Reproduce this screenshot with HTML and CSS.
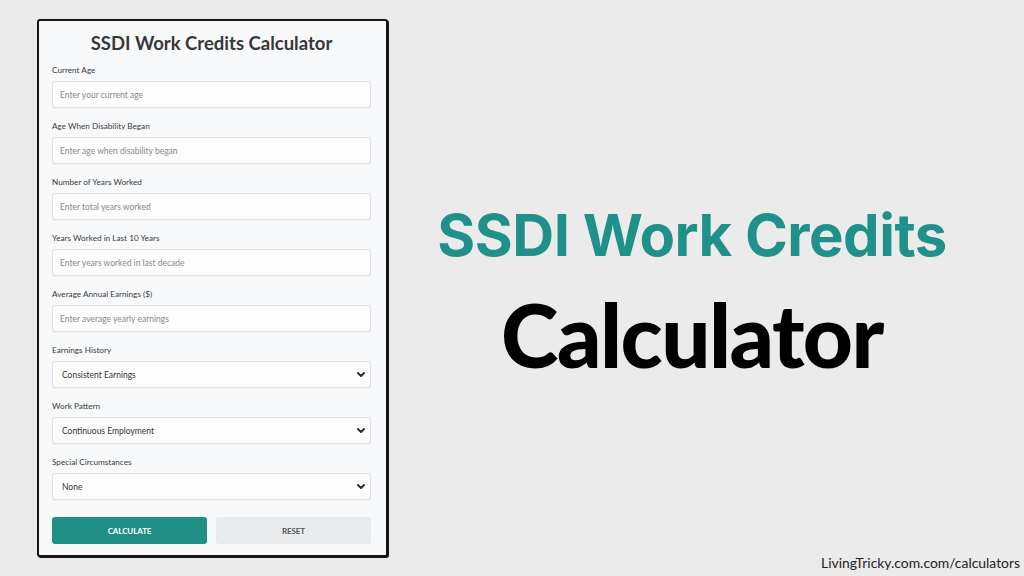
FILE: index.html
```html
<!DOCTYPE html>
<html lang="en">
<head>
<meta charset="utf-8">
<title>SSDI Work Credits Calculator</title>
<link rel="stylesheet" href="styles.css">
</head>
<body>
<div class="page">
  <form class="card">
    <h2 class="card-title">SSDI Work Credits Calculator</h2>
    <div class="field">
      <label class="label">Current Age</label>
      <div class="input">Enter your current age</div>
    </div>
    <div class="field">
      <label class="label">Age When Disability Began</label>
      <div class="input">Enter age when disability began</div>
    </div>
    <div class="field">
      <label class="label">Number of Years Worked</label>
      <div class="input">Enter total years worked</div>
    </div>
    <div class="field">
      <label class="label">Years Worked in Last 10 Years</label>
      <div class="input">Enter years worked in last decade</div>
    </div>
    <div class="field">
      <label class="label">Average Annual Earnings ($)</label>
      <div class="input">Enter average yearly earnings</div>
    </div>
    <div class="field">
      <label class="label">Earnings History</label>
      <div class="input select"><span>Consistent Earnings</span><svg class="chev" viewBox="0 0 8 5" width="8" height="5"><path d="M1 1 L4 4 L7 1" fill="none" stroke="#2b2b2b" stroke-width="1.9" stroke-linecap="round" stroke-linejoin="round"/></svg></div>
    </div>
    <div class="field">
      <label class="label">Work Pattern</label>
      <div class="input select"><span>Continuous Employment</span><svg class="chev" viewBox="0 0 8 5" width="8" height="5"><path d="M1 1 L4 4 L7 1" fill="none" stroke="#2b2b2b" stroke-width="1.9" stroke-linecap="round" stroke-linejoin="round"/></svg></div>
    </div>
    <div class="field">
      <label class="label">Special Circumstances</label>
      <div class="input select"><span>None</span><svg class="chev" viewBox="0 0 8 5" width="8" height="5"><path d="M1 1 L4 4 L7 1" fill="none" stroke="#2b2b2b" stroke-width="1.9" stroke-linecap="round" stroke-linejoin="round"/></svg></div>
    </div>
    <div class="actions">
      <div class="btn btn-primary">CALCULATE</div>
      <div class="btn btn-secondary">RESET</div>
    </div>
  </form>
  <section class="hero">
    <div class="hero-text">
      <h1 class="hero-title">SSDI Work Credits</h1>
      <div class="hero-sub">Calculator</div>
    </div>
    <footer class="site">LivingTricky.com.com/calculators</footer>
  </section>
</div>
</body>
</html>
```
FILE: styles.css
```css
html, body {
  margin: 0;
  padding: 0;
}
body {
  background: #ebebeb;
  font-family: Lato, "Open Sans", sans-serif;
}
.page {
  display: flex;
  box-sizing: border-box;
  height: 576px;
  padding: 19px 4px 0 37px;
}
.card {
  flex: none;
  box-sizing: border-box;
  width: 351px;
  height: 538px;
  margin: 0;
  padding: 10px 15px 12px 13px;
  background: #f8f9fa;
  border: 2px solid #161616;
  border-radius: 3px;
  box-shadow: 1px 1px 0 #161616;
  display: flex;
  flex-direction: column;
}
.card-title {
  margin: 0 0 9px;
  height: 24px;
  line-height: 24px;
  text-align: center;
  font-family: Lato, sans-serif;
  font-weight: 700;
  font-size: 18.5px;
  color: #383838;
}
.field {
  display: flex;
  flex-direction: column;
  margin-bottom: 12px;
}
.label {
  height: 12px;
  line-height: 12px;
  font-size: 8.2px;
  color: #3a3a3a;
  margin-bottom: 5px;
}
.input {
  box-sizing: border-box;
  height: 27px;
  display: flex;
  align-items: center;
  padding: 0 5px 0 7px;
  background: #fdfdfd;
  border: 1px solid #dedede;
  border-radius: 3px;
  box-shadow: 0 1px 1px rgba(0,0,0,0.04);
  font-size: 8.5px;
  color: #8a8a8a;
}
.select {
  justify-content: space-between;
  padding-left: 9px;
  color: #333;
}
.chev {
  display: block;
}
.actions {
  margin-top: 5px;
  display: grid;
  grid-template-columns: 1fr 1fr;
  gap: 9px;
}
.btn {
  height: 27px;
  display: flex;
  align-items: center;
  justify-content: center;
  border-radius: 3px;
  font-size: 8px;
  font-weight: 700;
  letter-spacing: -0.1px;
}
.btn-primary {
  background: #1f8f86;
  color: #fff;
}
.btn-secondary {
  background: #e9ebec;
  color: #555;
}
.hero {
  flex: 1;
  display: flex;
  flex-direction: column;
  align-items: center;
  padding-right: 24px;
}
.hero-text {
  margin-top: 187px;
  text-align: center;
}
.hero-title {
  margin: 0;
  font-family: Inter, sans-serif;
  font-weight: 700;
  font-size: 58px;
  line-height: 58px;
  letter-spacing: -0.5px;
  color: #1f918a;
}
.hero-sub {
  margin-top: 27px;
  font-family: Lato, sans-serif;
  font-weight: 900;
  font-size: 87px;
  line-height: 87px;
  letter-spacing: -1.5px;
  color: #000;
}
.site {
  margin-top: auto;
  align-self: flex-end;
  margin-right: -24px;
  padding-bottom: 5px;
  font-family: Lato, sans-serif;
  font-size: 13.9px;
  line-height: 16px;
  color: #222;
}
```
